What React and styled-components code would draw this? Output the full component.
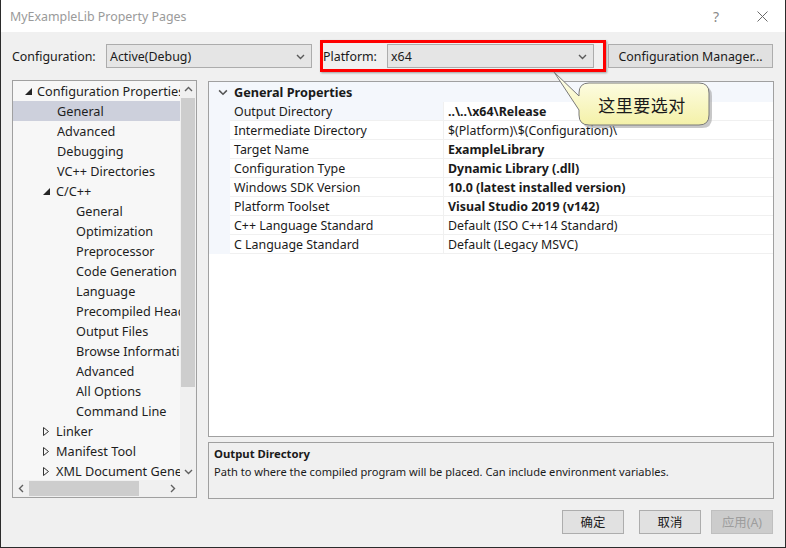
import React from "react"
import styled, { createGlobalStyle } from "styled-components"

const Global = createGlobalStyle`
  html, body {
    margin: 0;
    padding: 0;
    background: #f0f0f0;
  }
  * { box-sizing: border-box; }
`

const font = `"Noto Sans", "Noto Sans CJK SC", sans-serif`

const Window = styled.div`
  position: relative;
  width: 786px;
  height: 548px;
  background: #f0f0f0;
  border: 1px solid #2b2b2b;
  border-top: none;
  font-family: ${font};
  font-size: 12.4px;
  color: #1a1a1a;
  display: flex;
  flex-direction: column;
  overflow: hidden;
`

const TitleBar = styled.div`
  height: 32px;
  background: #fff;
  display: flex;
  align-items: center;
  padding-left: 9px;
`

const Title = styled.div`
  flex: 1;
  font-size: 12.4px;
  color: #9a9a9a;
`

const TitleButton = styled.div`
  width: 46px;
  height: 32px;
  display: flex;
  align-items: center;
  justify-content: center;
  color: #8a8a8a;
  font-size: 14px;
`

const Toolbar = styled.div`
  display: flex;
  align-items: center;
  height: 32px;
  margin-top: 8px;
  padding-left: 11px;
`

const Label = styled.span`
  width: ${p => p.$w}px;
  flex: none;
  white-space: nowrap;
`

const Select = styled.div`
  width: ${p => p.$w}px;
  height: 24px;
  flex: none;
  background: #e5e5e5;
  border: 1px solid #acacac;
  display: flex;
  align-items: center;
  justify-content: space-between;
  padding: 0 6px 0 3px;
`

const Highlight = styled.div`
  display: flex;
  align-items: center;
  height: 32px;
  margin-left: 8px;
  padding: 0 9px 0 0;
  border: 3px solid #ff0000;
  box-shadow: 1px 1px 2px rgba(0,0,0,0.35);
`

const Button = styled.div`
  width: ${p => p.$w}px;
  height: 24px;
  flex: none;
  background: ${p => (p.$disabled ? "#cccccc" : "#e1e1e1")};
  border: 1px solid ${p => (p.$disabled ? "#bfbfbf" : "#adadad")};
  color: ${p => (p.$disabled ? "#9d9d9d" : "#1a1a1a")};
  display: flex;
  align-items: center;
  justify-content: center;
  margin-left: ${p => p.$ml || 0}px;
  white-space: nowrap;
`

const Main = styled.div`
  display: flex;
  padding: 8px 12px 0 11px;
  gap: 11px;
`

const Tree = styled.div`
  width: 185px;
  height: 418px;
  border: 1px solid #a0a0a0;
  background: #f7f7f7;
  display: grid;
  grid-template-columns: 167px 16px;
  grid-template-rows: 399px 17px;
  font-size: 12.7px;
`

const TreeList = styled.div`
  overflow: hidden;
`

const TreeRow = styled.div`
  height: 20px;
  display: flex;
  align-items: center;
  padding-left: ${p => p.$indent}px;
  background: ${p => (p.$selected ? "#cdd0dc" : "transparent")};
  white-space: nowrap;
  overflow: hidden;
  color: #1e1e1e;
`

const Expander = styled.span`
  width: 19px;
  flex: none;
  display: flex;
  align-items: center;
  padding-left: ${p => p.$pl ?? 6}px;
`

const VScroll = styled.div`
  background: #f0f0f0;
  display: flex;
  flex-direction: column;
`

const ScrollArrow = styled.div`
  height: 17px;
  width: 16px;
  display: flex;
  align-items: center;
  justify-content: center;
  flex: none;
`

const VThumb = styled.div`
  height: 289px;
  margin: 0 1px;
  background: #cdcdcd;
`

const HScroll = styled.div`
  background: #f0f0f0;
  display: flex;
  align-items: center;
`

const HThumb = styled.div`
  width: 110px;
  height: 15px;
  background: #cdcdcd;
`

const Spacer = styled.div`
  flex: 1;
`

const Corner = styled.div`
  background: #f0f0f0;
`

const RightCol = styled.div`
  display: flex;
  flex-direction: column;
  gap: 5px;
  padding-top: 1px;
`

const Grid = styled.div`
  width: 566px;
  height: 356px;
  border: 1px solid #a0a0a0;
  background: #fff;
`

const Category = styled.div`
  height: 20px;
  background: #f4f7fc;
  display: flex;
  align-items: center;
  font-weight: bold;
  font-size: 12.7px;
`

const CatIcon = styled.span`
  width: 25px;
  display: flex;
  justify-content: center;
  padding-left: 2px;
`

const PropRow = styled.div`
  display: grid;
  grid-template-columns: 21px 214px 1fr;
  height: 19px;
`

const Margin = styled.div`
  background: #f4f7fc;
`

const Cell = styled.div`
  display: flex;
  align-items: center;
  padding-left: ${p => p.$pl}px;
  border-bottom: 1px solid #f0f0f0;
  border-right: ${p => (p.$divider ? "1px solid #f0f0f0" : "none")};
  background: ${p => (p.$selected ? "#f4f7fc" : "#fff")};
  font-weight: ${p => (p.$bold ? "bold" : "normal")};
  white-space: nowrap;
  overflow: hidden;
`

const Description = styled.div`
  width: 566px;
  height: 57px;
  border: 1px solid #a0a0a0;
  background: #f0f0f0;
  padding: 2px 5px;
  font-size: 11.1px;
  line-height: 18px;
`

const DescTitle = styled.div`
  font-weight: bold;
  font-size: 11.3px;
`

const Footer = styled.div`
  display: flex;
  justify-content: flex-end;
  padding: 11px 12px 0 0;
`

const Callout = styled.div`
  position: absolute;
  left: 550px;
  top: 68px;
  width: 168px;
  height: 66px;
`

const CalloutText = styled.div`
  position: absolute;
  left: 26px;
  top: 15px;
  width: 130px;
  height: 42px;
  display: flex;
  align-items: center;
  justify-content: center;
  font-family: "Noto Sans CJK SC", sans-serif;
  font-size: 17px;
  color: #1a1a1a;
  letter-spacing: 0.5px;
`

const Chevron = ({ dir = "down", size = 9, color = "#5a5a5a" }) => {
  const d = {
    down: "M1 3 L4.5 6.5 L8 3",
    up: "M1 6 L4.5 2.5 L8 6",
    left: "M6 1 L2.5 4.5 L6 8",
    right: "M3 1 L6.5 4.5 L3 8",
  }[dir]
  return (
    <svg width={size} height={size} viewBox="0 0 9 9">
      <path d={d} fill="none" stroke={color} strokeWidth="1.4" />
    </svg>
  )
}

const Expanded = () => (
  <svg width="7" height="7" viewBox="0 0 7 7">
    <path d="M7 0 L7 7 L0 7 Z" fill="#262626" />
  </svg>
)

const Collapsed = () => (
  <svg width="6" height="9" viewBox="0 0 6 9">
    <path d="M0.5 0.5 L5.5 4.5 L0.5 8.5 Z" fill="none" stroke="#333" strokeWidth="1" />
  </svg>
)

const treeItems = [
  { text: "Configuration Properties", level: 0, icon: "open" },
  { text: "General", level: 1, selected: true },
  { text: "Advanced", level: 1 },
  { text: "Debugging", level: 1 },
  { text: "VC++ Directories", level: 1 },
  { text: "C/C++", level: 1, icon: "open" },
  { text: "General", level: 2 },
  { text: "Optimization", level: 2 },
  { text: "Preprocessor", level: 2 },
  { text: "Code Generation", level: 2 },
  { text: "Language", level: 2 },
  { text: "Precompiled Headers", level: 2 },
  { text: "Output Files", level: 2 },
  { text: "Browse Information", level: 2 },
  { text: "Advanced", level: 2 },
  { text: "All Options", level: 2 },
  { text: "Command Line", level: 2 },
  { text: "Linker", level: 1, icon: "closed" },
  { text: "Manifest Tool", level: 1, icon: "closed" },
  { text: "XML Document Generator", level: 1, icon: "closed" },
]

const props = [
  { name: "Output Directory", value: "..\\..\\x64\\Release", bold: true, selected: true },
  { name: "Intermediate Directory", value: "$(Platform)\\$(Configuration)\\" },
  { name: "Target Name", value: "ExampleLibrary", bold: true },
  { name: "Configuration Type", value: "Dynamic Library (.dll)", bold: true },
  { name: "Windows SDK Version", value: "10.0 (latest installed version)", bold: true },
  { name: "Platform Toolset", value: "Visual Studio 2019 (v142)", bold: true },
  { name: "C++ Language Standard", value: "Default (ISO C++14 Standard)" },
  { name: "C Language Standard", value: "Default (Legacy MSVC)" },
]

const TreeItem = ({ item }) => {
  const icon = item.icon === "open" ? <Expanded /> : item.icon === "closed" ? <Collapsed /> : null
  if (item.level === 0) {
    return (
      <TreeRow $indent={5}>
        <Expander $pl={7}>{icon}</Expander>
        {item.text}
      </TreeRow>
    )
  }
  if (item.level === 1) {
    return (
      <TreeRow $indent={icon ? 24 : 44} $selected={item.selected}>
        {icon && <Expander>{icon}</Expander>}
        {item.text}
      </TreeRow>
    )
  }
  return <TreeRow $indent={63}>{item.text}</TreeRow>
}

export default function App() {
  return (
    <>
      <Global />
      <Window>
        <TitleBar>
          <Title>MyExampleLib Property Pages</Title>
          <TitleButton>?</TitleButton>
          <TitleButton>
            <svg width="11" height="11" viewBox="0 0 11 11">
              <path d="M0.5 0.5 L10.5 10.5 M10.5 0.5 L0.5 10.5" stroke="#6a6a6a" strokeWidth="1" />
            </svg>
          </TitleButton>
        </TitleBar>

        <Toolbar>
          <Label $w={94}>Configuration:</Label>
          <Select $w={206}>
            <span>Active(Debug)</span>
            <Chevron />
          </Select>
          <Highlight>
            <Label $w={64}>Platform:</Label>
            <Select $w={207}>
              <span>x64</span>
              <Chevron />
            </Select>
          </Highlight>
          <Button $w={165} $ml={2}>Configuration Manager...</Button>
        </Toolbar>

        <Main>
          <Tree>
            <TreeList>
              {treeItems.map((item, i) => (
                <TreeItem key={i} item={item} />
              ))}
            </TreeList>
            <VScroll>
              <ScrollArrow>
                <Chevron dir="up" color="#606060" />
              </ScrollArrow>
              <VThumb />
              <Spacer />
              <ScrollArrow>
                <Chevron dir="down" color="#606060" />
              </ScrollArrow>
            </VScroll>
            <HScroll>
              <ScrollArrow>
                <Chevron dir="left" color="#606060" />
              </ScrollArrow>
              <HThumb />
              <Spacer />
              <ScrollArrow>
                <Chevron dir="right" color="#606060" />
              </ScrollArrow>
            </HScroll>
            <Corner />
          </Tree>

          <RightCol>
            <Grid>
              <Category>
                <CatIcon>
                  <Chevron size={10} color="#555" />
                </CatIcon>
                General Properties
              </Category>
              {props.map((p, i) => (
                <PropRow key={i}>
                  <Margin />
                  <Cell $pl={4} $divider $selected={p.selected}>{p.name}</Cell>
                  <Cell $pl={4} $bold={p.bold}>{p.value}</Cell>
                </PropRow>
              ))}
            </Grid>
            <Description>
              <DescTitle>Output Directory</DescTitle>
              <div>Path to where the compiled program will be placed. Can include environment variables.</div>
            </Description>
          </RightCol>
        </Main>

        <Footer>
          <Button $w={62}>确定</Button>
          <Button $w={62} $ml={15}>取消</Button>
          <Button $w={62} $ml={10} $disabled>应用(A)</Button>
        </Footer>

        <Callout>
          <svg width="168" height="66" viewBox="0 0 168 66">
            <defs>
              <linearGradient id="cg" x1="0" y1="0" x2="0" y2="1">
                <stop offset="0" stopColor="#fffff0" />
                <stop offset="1" stopColor="#f4f1a8" />
              </linearGradient>
            </defs>
            <path
              d="M41 18 H151 Q161 18 161 28 V50 Q161 60 151 60 H41 Q31 60 31 50 V45 L6 7 L31 31 V28 Q31 18 41 18 Z"
              fill="#9a9a9a"
              opacity="0.55"
            />
            <path
              d="M38 15 H148 Q158 15 158 25 V47 Q158 57 148 57 H38 Q28 57 28 47 V42 L3 4 L28 28 V25 Q28 15 38 15 Z"
              fill="url(#cg)"
              stroke="#7a7a7a"
              strokeWidth="1"
            />
          </svg>
          <CalloutText>这里要选对</CalloutText>
        </Callout>
      </Window>
    </>
  )
}
